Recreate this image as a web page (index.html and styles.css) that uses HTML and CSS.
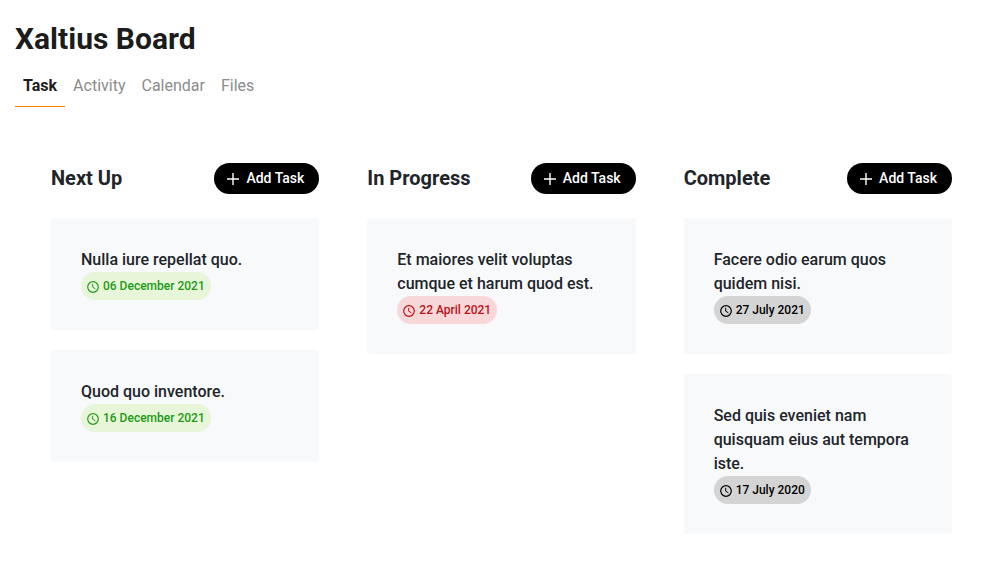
FILE: index.html
```html
<!DOCTYPE html>
<html lang="en">
<head>
<meta charset="utf-8">
<title>Xaltius Board</title>
<link rel="stylesheet" href="styles.css">
</head>
<body>
<svg class="sprite" aria-hidden="true">
  <symbol id="plus" viewBox="0 0 14 14"><path d="M7 1v12M1 7h12" fill="none" stroke="currentColor" stroke-width="1.4"/></symbol>
  <symbol id="clock" viewBox="0 0 12 12"><circle cx="6" cy="6" r="5.3" fill="none" stroke="currentColor" stroke-width="1.2"/><path d="M5.7 2.8v3.4l2.7 1.6" fill="none" stroke="currentColor"/></symbol>
</svg>
<header class="header">
  <h1 class="title">Xaltius Board</h1>
  <nav class="tabs">
    <a class="tab tab-active" href="#task">Task</a>
    <a class="tab" href="#activity">Activity</a>
    <a class="tab" href="#calendar">Calendar</a>
    <a class="tab" href="#files">Files</a>
  </nav>
</header>
<main class="board">
  <section class="column">
    <div class="column-head">
      <h2 class="column-title">Next Up</h2>
      <button class="add" type="button"><svg class="plus"><use href="#plus"/></svg>Add Task</button>
    </div>
    <article class="card">
      <p class="card-text">Nulla iure repellat quo.</p>
      <span class="date date-green"><svg class="clock"><use href="#clock"/></svg>06 December 2021</span>
    </article>
    <article class="card">
      <p class="card-text">Quod quo inventore.</p>
      <span class="date date-green"><svg class="clock"><use href="#clock"/></svg>16 December 2021</span>
    </article>
  </section>
  <section class="column">
    <div class="column-head">
      <h2 class="column-title">In Progress</h2>
      <button class="add" type="button"><svg class="plus"><use href="#plus"/></svg>Add Task</button>
    </div>
    <article class="card">
      <p class="card-text">Et maiores velit voluptas cumque et harum quod est.</p>
      <span class="date date-red"><svg class="clock"><use href="#clock"/></svg>22 April 2021</span>
    </article>
  </section>
  <section class="column">
    <div class="column-head">
      <h2 class="column-title">Complete</h2>
      <button class="add" type="button"><svg class="plus"><use href="#plus"/></svg>Add Task</button>
    </div>
    <article class="card">
      <p class="card-text">Facere odio earum quos quidem nisi.</p>
      <span class="date date-gray"><svg class="clock"><use href="#clock"/></svg>27 July 2021</span>
    </article>
    <article class="card">
      <p class="card-text">Sed quis eveniet nam quisquam eius aut tempora iste.</p>
      <span class="date date-gray"><svg class="clock"><use href="#clock"/></svg>17 July 2020</span>
    </article>
  </section>
</main>
</body>
</html>
```
FILE: styles.css
```css
* { box-sizing: border-box; }
body {
  margin: 0;
  background: #fff;
  color: #212529;
  font-family: Roboto, sans-serif;
  font-size: 16px;
  line-height: 24px;
}
.sprite { display: none; }
.header { padding: 21px 15px 0; }
.title {
  margin: 0;
  color: #1c1c1c;
  font-size: 30px;
  font-weight: 700;
  line-height: 36px;
}
.tabs { display: flex; margin-top: 8px; }
.tab {
  padding: 9px 8px 8px;
  border-bottom: 1px solid transparent;
  color: #8c8c8c;
  font-weight: 400;
  text-decoration: none;
}
.tab-active { border-color: #ff7a00; color: #1c1c1c; font-weight: 700; }
.board {
  display: grid;
  grid-template-columns: repeat(3, 1fr);
  gap: 48px;
  padding: 56px 54px 20px 51px;
}
.column { display: flex; flex-direction: column; gap: 20px; }
.column-head {
  display: flex;
  align-items: flex-start;
  justify-content: space-between;
  margin-bottom: 4px;
}
.column-title { margin: 0; font-size: 20px; font-weight: 700; line-height: 30px; }
.add {
  display: flex;
  align-items: center;
  gap: 6px;
  padding: 5px 15px 5px 12px;
  border: 0;
  border-radius: 16px;
  background: #000;
  color: #fff;
  font: 500 14px/21px Roboto, sans-serif;
}
.plus { width: 14px; height: 14px; }
.card { padding: 30px; border-radius: 4px; background: #f8f9fb; }
.card-text { margin: 0; font-weight: 500; }
.date {
  display: flex;
  align-items: center;
  gap: 4px;
  width: fit-content;
  height: 28px;
  padding: 0 6px;
  border-radius: 14px;
  font-size: 12px;
  font-weight: 500;
}
.clock { width: 12px; height: 12px; margin-top: 2px; }
.date-green { background: #e7f6d9; color: #229a16; }
.date-red { background: #f8d7d9; color: #b7131a; }
.date-gray { background: #d4d4d4; color: #000; }
```
